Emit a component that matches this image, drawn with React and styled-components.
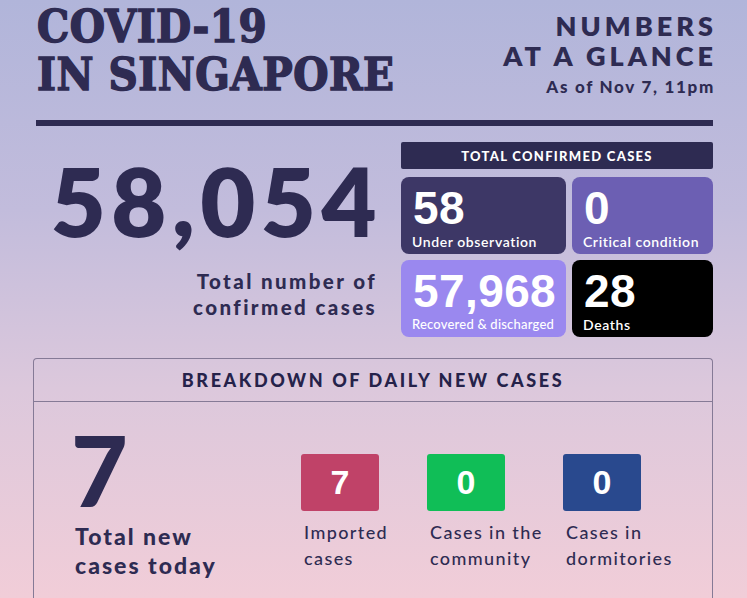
import React from "react";
import styled, { createGlobalStyle } from "styled-components";

const Global = createGlobalStyle`
  html, body { margin: 0; padding: 0; }
  body {
    width: 747px;
    height: 598px;
    overflow: hidden;
    background: linear-gradient(180deg, #b1b5da 0%, #c2bcdc 35%, #dcc8dc 65%, #f1cdd8 100%);
    font-family: "Lato", "Noto Sans", sans-serif;
    color: #2e2b52;
  }
`;

const Page = styled.div`
  width: 747px;
  height: 598px;
  box-sizing: border-box;
  padding: 0 34px 0 33px;
  display: flex;
  flex-direction: column;
`;

const Header = styled.header`
  display: flex;
  justify-content: space-between;
  align-items: flex-start;
  padding: 3px 0 0 4px;
`;

const Title = styled.h1`
  margin: 0;
  font-family: "DejaVu Serif Condensed", "DejaVu Serif", serif;
  font-weight: 700;
  font-size: 45px;
  line-height: 48px;
  letter-spacing: 0.5px;
  color: #2e2b52;
  -webkit-text-stroke: 1.4px #2e2b52;
`;

const Glance = styled.div`
  text-align: right;
  padding-top: 8px;
`;

const GlanceTitle = styled.div`
  font-weight: 800;
  font-size: 27px;
  line-height: 30px;
  letter-spacing: 4px;
  margin-right: -4px;
`;

const Stamp = styled.div`
  font-weight: 900;
  font-size: 17px;
  letter-spacing: 1.7px;
  margin-top: 5px;
  margin-right: -2px;
`;

const Rule = styled.div`
  height: 6px;
  background: #2e2b52;
  margin: 21px 0 0 3px;
`;

const Summary = styled.section`
  display: grid;
  grid-template-columns: 1fr 312px;
  column-gap: 23px;
  margin-top: 16px;
`;

const TotalBlock = styled.div`
  text-align: right;
  padding-right: 1px;
`;

const BigTotal = styled.div`
  font-weight: 800;
  font-size: 95px;
  line-height: 100px;
  letter-spacing: 5.5px;
  margin-top: 8px;
  margin-right: -5px;
`;

const TotalLabel = styled.div`
  font-weight: 900;
  font-size: 20.5px;
  line-height: 26px;
  letter-spacing: 2.4px;
  margin-top: 18px;
  margin-right: 0;
`;

const CasesPanel = styled.div`
  display: flex;
  flex-direction: column;
  gap: 8px;
`;

const PanelHeader = styled.div`
  height: 27px;
  background: #2e2b52;
  color: #fff;
  font-weight: 900;
  font-size: 13px;
  letter-spacing: 1.3px;
  display: flex;
  align-items: center;
  justify-content: center;
  border-radius: 2px;
`;

const CardGrid = styled.div`
  display: grid;
  grid-template-columns: 165px 1fr;
  grid-auto-rows: 77px;
  gap: 6px;
`;

const Card = styled.div`
  background: ${(p) => p.$bg};
  border-radius: 8px;
  color: #fff;
  padding: 8px 8px 0 12px;
  box-sizing: border-box;
`;

const CardNum = styled.div`
  font-family: "Liberation Sans", Arial, sans-serif;
  font-weight: 700;
  font-size: 46px;
  line-height: 46px;
  letter-spacing: 0.4px;
`;

const CardLabel = styled.div`
  font-size: ${(p) => (p.$light ? "13px" : "14px")};
  font-weight: ${(p) => (p.$light ? 500 : 600)};
  letter-spacing: ${(p) => (p.$light ? "0.2px" : "0.6px")};
  margin-top: 2px;
  margin-left: -1px;
  white-space: nowrap;
`;

const Breakdown = styled.section`
  margin-top: 21px;
  border: 1px solid #857a96;
  border-bottom: none;
  border-radius: 4px 4px 0 0;
  flex: 1;
  display: flex;
  flex-direction: column;
`;

const BreakdownHead = styled.div`
  height: 42px;
  border-bottom: 1px solid #857a96;
  display: flex;
  align-items: center;
  justify-content: center;
  font-weight: 900;
  font-size: 18px;
  letter-spacing: 2.6px;
  color: #25224a;
`;

const BreakdownBody = styled.div`
  display: flex;
  padding: 24px 0 0 41px;
`;

const TodayBlock = styled.div`
  width: 226px;
`;

const TodayNum = styled.div`
  font-weight: 900;
  font-size: 98px;
  line-height: 86px;
  margin-left: -4px;
`;

const TodayLabel = styled.div`
  font-weight: 900;
  font-size: 23px;
  line-height: 29px;
  letter-spacing: 2px;
  margin-top: 10px;
`;

const Kinds = styled.div`
  display: grid;
  grid-template-columns: 126px 136px auto;
  padding-top: 28px;
`;

const Kind = styled.div`
  display: flex;
  flex-direction: column;
`;

const KindBox = styled.div`
  width: 78px;
  height: 57px;
  border-radius: 3px;
  background: ${(p) => p.$bg};
  color: #fff;
  display: flex;
  align-items: center;
  justify-content: center;
  font-family: "Liberation Sans", Arial, sans-serif;
  font-weight: 700;
  font-size: 34px;
`;

const KindLabel = styled.div`
  font-size: 18px;
  font-weight: 500;
  line-height: 26px;
  letter-spacing: 1.4px;
  margin-top: 8px;
  padding-left: 3px;
  color: #2e2b52;
`;

export default function App() {
  return (
    <>
      <Global />
      <Page>
        <Header>
          <Title>
            COVID-19
            <br />
            IN SINGAPORE
          </Title>
          <Glance>
            <GlanceTitle>NUMBERS</GlanceTitle>
            <GlanceTitle>AT A GLANCE</GlanceTitle>
            <Stamp>As of Nov 7, 11pm</Stamp>
          </Glance>
        </Header>
        <Rule />
        <Summary>
          <TotalBlock>
            <BigTotal>58,054</BigTotal>
            <TotalLabel>
              Total number of
              <br />
              confirmed cases
            </TotalLabel>
          </TotalBlock>
          <CasesPanel>
            <PanelHeader>TOTAL CONFIRMED CASES</PanelHeader>
            <CardGrid>
              <Card $bg="#3d3766">
                <CardNum>58</CardNum>
                <CardLabel>Under observation</CardLabel>
              </Card>
              <Card $bg="#6c5fb3">
                <CardNum>0</CardNum>
                <CardLabel>Critical condition</CardLabel>
              </Card>
              <Card $bg="#9a88ef">
                <CardNum>57,968</CardNum>
                <CardLabel $light>Recovered &amp; discharged</CardLabel>
              </Card>
              <Card $bg="#000000">
                <CardNum>28</CardNum>
                <CardLabel>Deaths</CardLabel>
              </Card>
            </CardGrid>
          </CasesPanel>
        </Summary>
        <Breakdown>
          <BreakdownHead>BREAKDOWN OF DAILY NEW CASES</BreakdownHead>
          <BreakdownBody>
            <TodayBlock>
              <TodayNum>7</TodayNum>
              <TodayLabel>
                Total new
                <br />
                cases today
              </TodayLabel>
            </TodayBlock>
            <Kinds>
              <Kind>
                <KindBox $bg="#c04268">7</KindBox>
                <KindLabel>
                  Imported
                  <br />
                  cases
                </KindLabel>
              </Kind>
              <Kind>
                <KindBox $bg="#10be57">0</KindBox>
                <KindLabel>
                  Cases in the
                  <br />
                  community
                </KindLabel>
              </Kind>
              <Kind>
                <KindBox $bg="#29498e">0</KindBox>
                <KindLabel>
                  Cases in
                  <br />
                  dormitories
                </KindLabel>
              </Kind>
            </Kinds>
          </BreakdownBody>
        </Breakdown>
      </Page>
    </>
  );
}
